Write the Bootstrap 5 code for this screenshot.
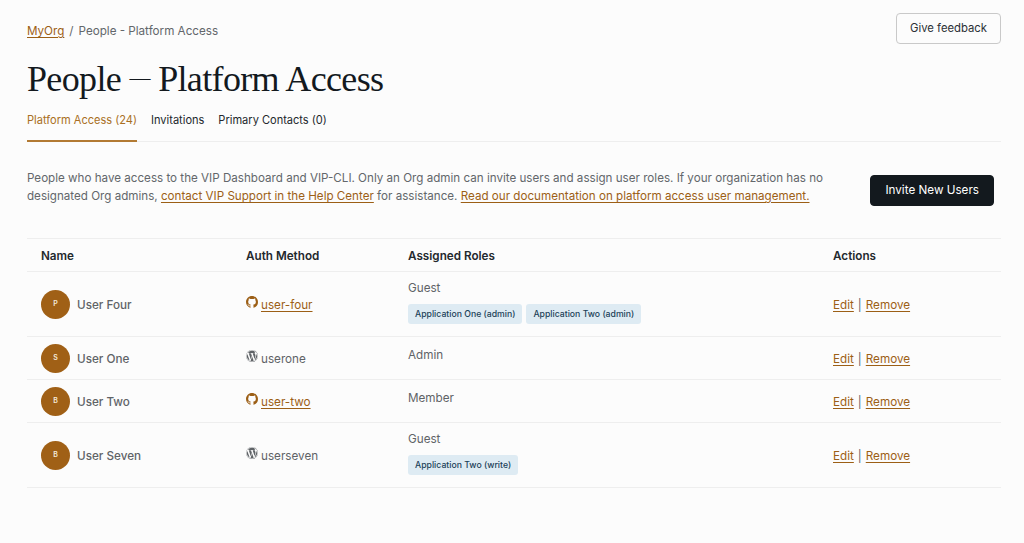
<!DOCTYPE html>
<html lang="en">
<head>
<meta charset="utf-8">
<title>People - Platform Access</title>
<link rel="stylesheet" href="https://cdn.jsdelivr.net/npm/bootstrap@5.3.0/dist/css/bootstrap.min.css">
<style>
html,body{height:100%}
body{background:#fcfcfc;font-family:Inter,"Liberation Sans",sans-serif;font-size:11.7px;line-height:18px;color:#5f6367;overflow:hidden}
a{color:#9c5f16;text-underline-offset:2px}
.page-wrap{padding:13px 23px 0 27px}
.crumbs{--bs-breadcrumb-divider:'/';--bs-breadcrumb-margin-bottom:0;--bs-breadcrumb-item-padding-x:5px;font-size:11.65px;margin-top:9px}
.crumbs .breadcrumb-item.active{color:#63676b}
.crumbs .breadcrumb-item::before{color:#63676b}
.feedback-btn{--bs-btn-font-size:11.3px;--bs-btn-color:#2b3035;--bs-btn-border-color:#c9c9c9;--bs-btn-padding-x:13px;--bs-btn-padding-y:6px;--bs-btn-border-radius:4px;--bs-btn-line-height:17px;height:31px}
.page-title{font-family:"Liberation Serif",serif;font-size:36px;line-height:46px;font-weight:400;color:#13191e;margin:12px 0 0;letter-spacing:-.65px}
.title-dash{font-size:21px;line-height:1;vertical-align:6px}
.tab-bar{border-bottom:1px solid #eeeeee;margin-top:10px;gap:14px}
.tab-item{display:block;padding:0 0 11px;color:#23282d;text-decoration:none;font-size:11.05px;line-height:17px;margin-bottom:-1px;padding-bottom:12px}
.tab-item.current{color:#a96f23;border-bottom:2px solid #b27a33;padding-bottom:11px}
.intro-row{margin-top:27px;gap:40px;padding-right:7px}
.intro-text{margin:0;font-size:11.63px;color:#63676b}
.invite-btn{--bs-btn-font-size:11.7px;--bs-btn-bg:#13191e;--bs-btn-color:#fff;--bs-btn-border-color:#13191e;--bs-btn-padding-x:14px;--bs-btn-padding-y:6px;--bs-btn-border-radius:4px;--bs-btn-line-height:17px;height:31px;white-space:nowrap;margin-top:6px;flex:none}
.people-table{table-layout:fixed;width:100%;margin:32px 0 0;--bs-table-bg:transparent;--bs-table-border-color:#eeeeee;--bs-table-color:#5f6367;font-size:11.7px;border-top:1px solid #eeeeee}
.people-table th{font-weight:600;color:#23282d;padding:8px 14px 6px;line-height:18px;vertical-align:middle}
.people-table td{padding:1px 14px 0;vertical-align:middle}
.col-name{width:205px}.col-auth{width:162px}.col-roles{width:425px}
.person{display:flex;align-items:center;gap:7px;font-weight:500}
.avatar{width:29px;height:29px;border-radius:50%;background:#a06016;color:#f5e9da;font-size:7px;font-weight:600;display:flex;align-items:center;justify-content:center;flex:none;margin-top:-1px}
.auth-icon{width:12px;height:12px;vertical-align:1px;margin-right:3px}
.icon-gh{fill:#9c5f16}.icon-wp{fill:#5f6367}
.row-short td{height:43px}
.row-tall td{height:65px}
.row-short .role-cell{padding-bottom:7px}
.row-tall .role-cell{padding-bottom:7px}
.role-tag{display:inline-block;background:#deebf3;color:#1c4258;font-size:8.7px;font-weight:500;line-height:14px;padding:3px 7px;border-radius:3px;margin:7px 4px 0 0}
.role-name{display:block}
.sep{margin:0 4px}
</style>
</head>
<body>
<div class="page-wrap">
  <div class="d-flex justify-content-between align-items-start">
    <nav aria-label="breadcrumb">
      <ol class="breadcrumb crumbs">
        <li class="breadcrumb-item"><a href="#">MyOrg</a></li>
        <li class="breadcrumb-item active" aria-current="page">People - Platform Access</li>
      </ol>
    </nav>
    <button type="button" class="btn btn-outline-secondary feedback-btn">Give feedback</button>
  </div>
  <h1 class="page-title">People <span class="title-dash">—</span> Platform Access</h1>
  <div class="d-flex tab-bar">
    <a class="tab-item current" href="#">Platform Access (24)</a>
    <a class="tab-item" href="#">Invitations</a>
    <a class="tab-item" href="#">Primary Contacts (0)</a>
  </div>
  <div class="d-flex justify-content-between align-items-start intro-row">
    <p class="intro-text">People who have access to the VIP Dashboard and VIP-CLI. Only an Org admin can invite users and assign user roles. If your organization has no designated Org admins, <a href="#">contact VIP Support in the Help Center</a> for assistance. <a href="#">Read our documentation on platform access user management.</a></p>
    <button type="button" class="btn invite-btn">Invite New Users</button>
  </div>
  <table class="table people-table">
    <colgroup><col class="col-name"><col class="col-auth"><col class="col-roles"><col></colgroup>
    <thead>
      <tr><th>Name</th><th>Auth Method</th><th>Assigned Roles</th><th>Actions</th></tr>
    </thead>
    <tbody>
      <tr class="row-tall">
        <td><div class="person"><span class="avatar">P</span>User Four</div></td>
        <td><svg class="auth-icon icon-gh" viewBox="0 0 16 16"><use href="#gh"/></svg><a href="#">user-four</a></td>
        <td class="role-cell"><span class="role-name">Guest</span><span class="role-tag">Application One (admin)</span><span class="role-tag">Application Two (admin)</span></td>
        <td><a href="#">Edit</a><span class="sep">|</span><a href="#">Remove</a></td>
      </tr>
      <tr class="row-short">
        <td><div class="person"><span class="avatar">S</span>User One</div></td>
        <td><svg class="auth-icon icon-wp" viewBox="0 0 16 16"><use href="#wp"/></svg>userone</td>
        <td class="role-cell"><span class="role-name">Admin</span></td>
        <td><a href="#">Edit</a><span class="sep">|</span><a href="#">Remove</a></td>
      </tr>
      <tr class="row-short">
        <td><div class="person"><span class="avatar">B</span>User Two</div></td>
        <td><svg class="auth-icon icon-gh" viewBox="0 0 16 16"><use href="#gh"/></svg><a href="#">user-two</a></td>
        <td class="role-cell"><span class="role-name">Member</span></td>
        <td><a href="#">Edit</a><span class="sep">|</span><a href="#">Remove</a></td>
      </tr>
      <tr class="row-tall">
        <td><div class="person"><span class="avatar">B</span>User Seven</div></td>
        <td><svg class="auth-icon icon-wp" viewBox="0 0 16 16"><use href="#wp"/></svg>userseven</td>
        <td class="role-cell"><span class="role-name">Guest</span><span class="role-tag">Application Two (write)</span></td>
        <td><a href="#">Edit</a><span class="sep">|</span><a href="#">Remove</a></td>
      </tr>
    </tbody>
  </table>
</div>
<svg class="d-none" xmlns="http://www.w3.org/2000/svg">
  <symbol id="gh" viewBox="0 0 16 16"><path d="M8 0C3.58 0 0 3.58 0 8c0 3.54 2.29 6.53 5.47 7.59.4.07.55-.17.55-.38 0-.19-.01-.82-.01-1.49-2.01.37-2.53-.49-2.69-.94-.09-.23-.48-.94-.82-1.13-.28-.15-.68-.52-.01-.53.63-.01 1.08.58 1.23.82.72 1.21 1.87.87 2.33.66.07-.52.28-.87.51-1.07-1.78-.2-3.64-.89-3.64-3.95 0-.87.31-1.59.82-2.15-.08-.2-.36-1.02.08-2.12 0 0 .67-.21 2.2.82.64-.18 1.32-.27 2-.27s1.36.09 2 .27c1.53-1.04 2.2-.82 2.2-.82.44 1.1.16 1.92.08 2.12.51.56.82 1.27.82 2.15 0 3.07-1.87 3.75-3.65 3.95.29.25.54.73.54 1.48 0 1.07-.01 1.93-.01 2.2 0 .21.15.46.55.38A8.01 8.01 0 0 0 16 8c0-4.42-3.58-8-8-8"/></symbol>
  <symbol id="wp" viewBox="0 0 16 16"><path d="M12.633 7.653c0-.848-.305-1.435-.566-1.892l-.08-.13c-.317-.51-.594-.958-.594-1.48 0-.63.478-1.218 1.152-1.218q.03 0 .058.003l.031.003A6.84 6.84 0 0 0 8 1.137 6.86 6.86 0 0 0 2.266 4.23c.16.005.313.012.446.012.717 0 1.828-.087 1.828-.087.37-.022.414.521.044.565 0 0-.371.044-.785.065l2.5 7.434 1.5-4.506-1.07-2.929c-.369-.022-.719-.065-.719-.065-.37-.022-.327-.588.043-.566 0 0 1.134.087 1.808.087.718 0 1.83-.087 1.83-.087.37-.022.413.522.043.566 0 0-.372.043-.785.065l2.48 7.377.684-2.287.054-.173c.27-.86.469-1.495.469-2.046zM1.137 8a6.86 6.86 0 0 0 3.868 6.176L1.73 5.206A6.8 6.8 0 0 0 1.137 8"/><path d="M6.061 14.583 8.121 8.6l2.109 5.78q.02.05.049.094a6.85 6.85 0 0 1-4.218.109m7.96-9.876q.046.328.047.706c0 .696-.13 1.479-.522 2.458l-2.096 6.06a6.86 6.86 0 0 0 2.572-9.224z"/><path fill-rule="evenodd" d="M0 8c0-4.411 3.589-8 8-8s8 3.589 8 8-3.59 8-8 8-8-3.589-8-8m.367 0c0 4.209 3.424 7.633 7.633 7.633S15.632 12.209 15.632 8C15.632 3.79 12.208.367 8 .367 3.79.367.367 3.79.367 8"/></symbol>
</svg>
<script src="https://cdn.jsdelivr.net/npm/bootstrap@5.3.0/dist/js/bootstrap.bundle.min.js"></script>
</body>
</html>
